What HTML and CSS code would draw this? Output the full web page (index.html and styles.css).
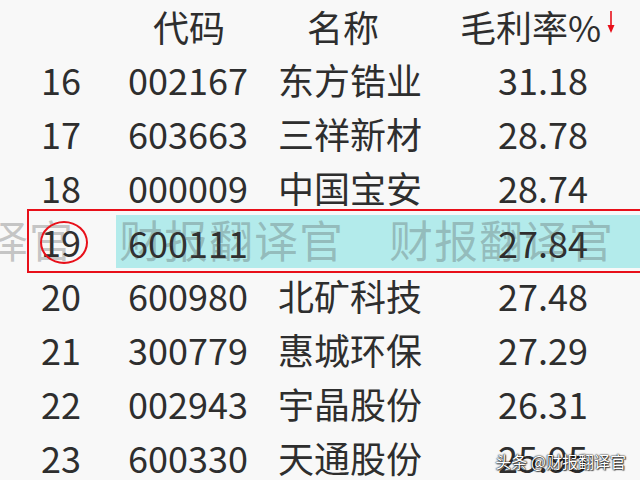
FILE: index.html
```html
<!DOCTYPE html>
<html lang="zh-CN">
<head>
<meta charset="utf-8">
<title>毛利率排行</title>
<link rel="stylesheet" href="styles.css">
</head>
<body>
<div class="page">
  <div class="table">
    <div class="row head">
      <span class="idx"></span>
      <span class="code">代码</span>
      <span class="name">名称</span>
      <span class="val">毛利率%<svg class="sort" width="10" height="26" viewBox="0 0 10 26"><line x1="5" y1="1" x2="5" y2="18" stroke="#e8101a" stroke-width="1.6"/><polygon points="1.5,15 8.5,15 5,23" fill="#e8101a"/></svg></span>
    </div>
    <div class="row"><span class="idx">16</span><span class="code">002167</span><span class="name">东方锆业</span><span class="val">31.18</span></div>
    <div class="row"><span class="idx">17</span><span class="code">603663</span><span class="name">三祥新材</span><span class="val">28.78</span></div>
    <div class="row"><span class="idx">18</span><span class="code">000009</span><span class="name">中国宝安</span><span class="val">28.74</span></div>
    <div class="row hl">
      <span class="idx">19</span><span class="code">600111</span><span class="name"></span><span class="val">27.84</span>
      <div class="wm">译官　财报翻译官　财报翻译官</div>
      <div class="frame"></div>
      <div class="ring"></div>
    </div>
    <div class="row"><span class="idx">20</span><span class="code">600980</span><span class="name">北矿科技</span><span class="val">27.48</span></div>
    <div class="row"><span class="idx">21</span><span class="code">300779</span><span class="name">惠城环保</span><span class="val">27.29</span></div>
    <div class="row"><span class="idx">22</span><span class="code">002943</span><span class="name">宇晶股份</span><span class="val">26.31</span></div>
    <div class="row"><span class="idx">23</span><span class="code">600330</span><span class="name">天通股份</span><span class="val">25.95</span></div>
  </div>
  <div class="credit">头条 @财报翻译官</div>
</div>
</body>
</html>
```
FILE: styles.css
```css
html, body {
  margin: 0;
  padding: 0;
}
body {
  width: 640px;
  height: 480px;
  overflow: hidden;
  background: #f8f8f8;
  font-family: "Noto Sans CJK SC", "Noto Sans", sans-serif;
  color: #2e2e2e;
}
.page {
  position: relative;
  width: 640px;
  height: 480px;
  overflow: hidden;
}
.table {
  display: flex;
  flex-direction: column;
}
.row {
  position: relative;
  display: grid;
  grid-template-columns: 116px 150px 174px 160px 40px;
  height: 54px;
  align-items: center;
  font-size: 36px;
  line-height: 54px;
  white-space: nowrap;
}
.row.head {
  height: 52px;
  line-height: 52px;
}
.idx {
  padding-left: 41px;
}
.code {
  padding-left: 12px;
}
.name {
  padding-left: 12px;
}
.val {
  text-align: right;
  padding-right: 12px;
}
.head .code {
  padding-left: 37px;
}
.head .name {
  padding-left: 41px;
}
.head .val {
  text-align: left;
  padding-left: 20px;
  padding-right: 0;
  position: relative;
}
.sort {
  position: absolute;
  left: 166px;
  top: 10px;
}
.hl .code,
.hl .name,
.hl .val {
  background: #b3ebeb;
  height: 53px;
}
.hl::after {
  content: "";
  background: #b3ebeb;
  height: 53px;
  grid-column: 5;
  grid-row: 1;
}
.wm {
  position: absolute;
  left: -16px;
  top: -2px;
  font-size: 44px;
  line-height: 54px;
  letter-spacing: 1px;
  color: rgba(70, 70, 70, 0.28);
  pointer-events: none;
}
.frame {
  position: absolute;
  left: 27px;
  right: -20px;
  top: -5px;
  bottom: -5px;
  border: 2px solid #e8101a;
}
.ring {
  position: absolute;
  left: 40px;
  top: 7px;
  width: 44px;
  height: 39px;
  border: 2px solid #e8101a;
  border-radius: 50%;
}
.credit {
  position: absolute;
  right: 14px;
  bottom: 9px;
  font-size: 16px;
  line-height: 20px;
  color: #ffffff;
  text-shadow: 0 0 2px #000, 0 0 1px #000, 1px 1px 1px rgba(0,0,0,0.6);
}
```
